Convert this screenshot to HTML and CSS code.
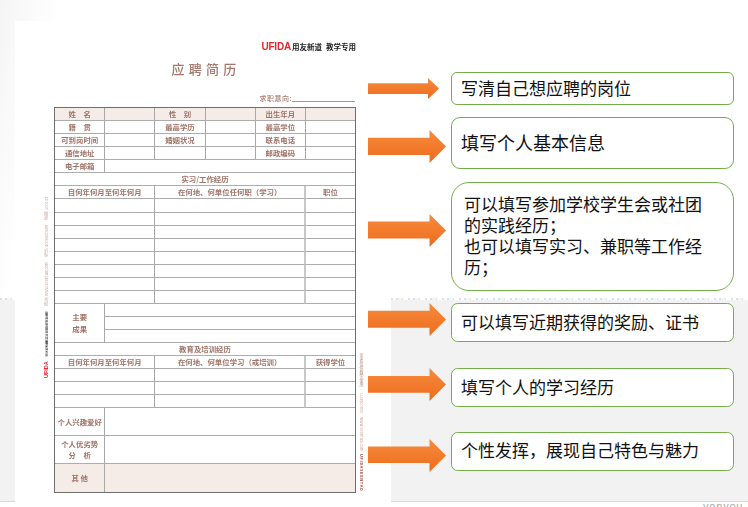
FILE: index.html
```html
<!DOCTYPE html>
<html lang="zh-CN">
<head>
<meta charset="utf-8">
<title>应聘简历</title>
<link rel="stylesheet" href="styles.css">
</head>
<body>
<main class="page">
  <section class="paper">
    <div class="logo"><b>UFIDA</b><span>用友新道</span><span class="logo-sub">教学专用</span></div>
    <h1 class="title">应聘简历</h1>
    <div class="intent"><span>求职意向:</span><i></i></div>
    <div class="sheet-row">
      <div class="strip strip-left"><b>UFIDA</b><strong>用友新道教育科技有限公司授权使用</strong><span>网址: www.seentao.com</span><span>电话: 4006600588</span><span>邮编: 100193</span></div>
      <div class="sheet">
        <div class="c tint">姓　名</div><div class="c tint"></div><div class="c tint">性　别</div><div class="c tint"></div><div class="c tint">出生年月</div><div class="c tint soft"></div>
        <div class="c">籍　贯</div><div class="c"></div><div class="c">最高学历</div><div class="c"></div><div class="c">最高学位</div><div class="c soft"></div>
        <div class="c">可到岗时间</div><div class="c"></div><div class="c">婚姻状况</div><div class="c"></div><div class="c">联系电话</div><div class="c soft"></div>
        <div class="c">通信地址</div><div class="c"></div><div class="c"></div><div class="c"></div><div class="c">邮政编码</div><div class="c soft"></div>
        <div class="c">电子邮箱</div><div class="c s5"></div>
        <div class="c s6">实习/工作经历</div>
        <div class="c s2">自何年何月至何年何月</div><div class="c s3">在何地、何单位任何职（学习）</div><div class="c soft">职位</div>
        <div class="c s2"></div><div class="c s3"></div><div class="c soft"></div>
        <div class="c s2"></div><div class="c s3"></div><div class="c soft"></div>
        <div class="c s2"></div><div class="c s3"></div><div class="c soft"></div>
        <div class="c s2"></div><div class="c s3"></div><div class="c soft"></div>
        <div class="c s2"></div><div class="c s3"></div><div class="c soft"></div>
        <div class="c s2"></div><div class="c s3"></div><div class="c soft"></div>
        <div class="c s2"></div><div class="c s3"></div><div class="c soft"></div>
        <div class="c s2"></div><div class="c s3"></div><div class="c soft"></div>
        <div class="c r3">主要<br>成果</div><div class="c s5"></div>
        <div class="c s5"></div>
        <div class="c s5"></div>
        <div class="c s6">教育及培训经历</div>
        <div class="c s2">自何年何月至何年何月</div><div class="c s3">在何地、何单位学习（或培训）</div><div class="c soft">获得学位</div>
        <div class="c s2"></div><div class="c s3"></div><div class="c soft"></div>
        <div class="c s2"></div><div class="c s3"></div><div class="c soft"></div>
        <div class="c s2"></div><div class="c s3"></div><div class="c soft"></div>
        <div class="c">个人兴趣爱好</div><div class="c s5"></div>
        <div class="c">个人优劣势<br>分　析</div><div class="c s5"></div>
        <div class="c tint end">其 他</div><div class="c s5 tint end"></div>
      </div>
      <div class="strip strip-right"><span>（本表仅供教学使用）</span><span>LU3800850</span><span>www.seentao.com</span><b>UFIDASEENTAO</b></div>
    </div>
  </section>

  <section class="notes">
    <svg width="0" height="0" class="defs" aria-hidden="true"><defs><linearGradient id="arrow-fill" x1="0" y1="0" x2="0" y2="1"><stop offset="0" stop-color="#f68c3e"/><stop offset="1" stop-color="#ee6b1c"/></linearGradient></defs></svg>
    <div class="note note-1">
      <svg class="arrow" width="71" height="21" viewBox="0 0 71 21"><path fill="url(#arrow-fill)" d="M0 5.3H60V0L71 10.5 60 21V16H0Z"/></svg>
      <p class="box h1">写清自己想应聘的岗位</p>
    </div>
    <div class="note note-2">
      <svg class="arrow" width="78" height="33" viewBox="0 0 78 33"><path fill="url(#arrow-fill)" d="M0 7.7H61.5V0L78 16.5 61.5 33V25H0Z"/></svg>
      <p class="box h2">填写个人基本信息</p>
    </div>
    <div class="note note-3">
      <svg class="arrow" width="78" height="33" viewBox="0 0 78 33"><path fill="url(#arrow-fill)" d="M0 7.5H61.5V0L78 16.5 61.5 33V24.5H0Z"/></svg>
      <p class="box h3">可以填写参加学校学生会或社团的实践经历；<br>也可以填写实习、兼职等工作经历；</p>
    </div>
    <div class="note note-4">
      <svg class="arrow" width="78" height="33" viewBox="0 0 78 33"><path fill="url(#arrow-fill)" d="M0 7.7H61.5V0L78 16.5 61.5 33V24.7H0Z"/></svg>
      <p class="box h4">可以填写近期获得的奖励、证书</p>
    </div>
    <div class="note note-5">
      <svg class="arrow" width="78" height="33" viewBox="0 0 78 33"><path fill="url(#arrow-fill)" d="M0 8H61.5V0L78 16.5 61.5 33V24.7H0Z"/></svg>
      <p class="box h5">填写个人的学习经历</p>
    </div>
    <div class="note note-6">
      <svg class="arrow" width="78" height="33" viewBox="0 0 78 33"><path fill="url(#arrow-fill)" d="M0 7.5H61.5V0L78 16.5 61.5 33V24H0Z"/></svg>
      <p class="box h6">个性发挥，展现自己特色与魅力</p>
    </div>
    <div class="brand">yonyou_5</div>
  </section>
</main>
</body>
</html>
```
FILE: styles.css
```css
* { box-sizing: border-box; }
html, body { margin: 0; padding: 0; }
body { font-family: "Noto Sans CJK SC", "Noto Sans", sans-serif; background: #fff; }

.page {
  width: 748px;
  height: 507px;
  overflow: hidden;
  display: grid;
  grid-template-columns: 15px 353px 23px 357px;
  grid-template-rows: 507px;
  background:
    repeating-linear-gradient(90deg, #e9d8f5 0 2px, #fff 2px 5px, #cfe6ea 5px 7px, #f5f5f5 7px 11px, #e8e0c8 11px 12px, #fff 12px 17px) 0 298px / 100% 2px no-repeat,
    linear-gradient(#d9d9d9, #d9d9d9) 0 501px / 100% 1px no-repeat,
    linear-gradient(#f2f2f2, #f2f2f2) 0 298px / 100% 204px no-repeat,
    linear-gradient(100deg, #f5f5f5 0, #fff 60px) 0 0 / 100% 298px no-repeat;
}

/* paper */
.paper {
  grid-column: 2 / 4;
  grid-row: 1;
  margin-top: 21px;
  height: 482px;
  background: #fff;
  padding: 21px 0 0 27px;
  color: #a07468;
}
.logo {
  width: 314px;
  display: flex;
  justify-content: flex-end;
  align-items: center;
  gap: 1px;
  height: 9px;
  color: #222;
  font-size: 8px;
  font-weight: 700;
  line-height: 9px;
  filter: blur(0.4px);
}
.logo b { color: #e8262a; font-family: "Liberation Sans", sans-serif; font-size: 10px; font-weight: 700; letter-spacing: -.2px; }
.logo span { font-size: 7.5px; }
.logo-sub { margin-left: 3px; }
.title {
  width: 301px;
  margin: 9px 0 0 13.5px;
  text-align: center;
  font-size: 13px;
  line-height: 17px;
  font-weight: 500;
  letter-spacing: 4.3px;
  color: #a5786b;
  filter: blur(0.45px);
}
.intent {
  width: 301px;
  margin: 15px 0 0 12px;
  display: flex;
  justify-content: flex-end;
  align-items: flex-end;
  height: 11px;
  font-size: 7px;
  letter-spacing: .5px;
  line-height: 10px;
  font-weight: 500;
  color: #a67d72;
  filter: blur(0.4px);
}
.intent i { display: block; width: 63px; height: 1px; background: #9c9c9c; margin-bottom: 1px; }
.sheet-row { display: flex; margin-top: 4px; }

/* table */
.sheet {
  width: 302px;
  display: grid;
  grid-template-columns: 50.4px 50px 50.2px 50.3px 50px 49.1px;
  grid-template-rows: repeat(23, 13.07px) repeat(3, 28px);
  border: 1px solid #6f6f6f;
  font-size: 7.4px;
  font-weight: 700;
  line-height: 10.5px;
  text-align: center;
  filter: blur(0.45px);
}
.c {
  display: flex;
  align-items: center;
  justify-content: center;
  border-right: 1px solid #a8a8a8;
  border-bottom: 1px solid #adadad;
  white-space: nowrap;
}
.s2 { grid-column: span 2; }
.s3 { grid-column: span 3; border-right: 2px solid #c8c8c8; }
.s5 { grid-column: span 5; border-right: 0; }
.s6 { grid-column: span 6; border-right: 0; }
.soft { border-right: 0; }
.r3 { grid-row: span 3; line-height: 12.5px; }
.tint { background: #f5ece8; }
.end { border-bottom: 0; }

/* side strips */
.strip {
  width: 12px;
  height: 385px;
  writing-mode: vertical-rl;
  display: flex;
  align-items: center;
  font-size: 4px;
  line-height: 5px;
  color: #c9a79c;
  white-space: nowrap;
  filter: blur(0.35px);
}
.strip-left { transform: rotate(180deg); padding: 114px 0 0 3px; gap: 5px; }
.strip-left b { color: #e8262a; font-family: "Liberation Sans", sans-serif; font-size: 5.5px; }
.strip-left strong { color: #333; font-size: 2.8px; width: 4px; font-weight: 700; }
.strip-right { justify-content: flex-end; gap: 3px; padding-right: 2px; }
.strip-right b { color: #a5574c; font-size: 4px; letter-spacing: .6px; }
.strip-right span:first-child { color: #b58e84; }

/* notes */
.notes { grid-column: 3 / 5; grid-row: 1; position: relative; z-index: 1; display: flex; flex-direction: column; padding-top: 72px; }
.defs { position: absolute; }
.note { display: flex; align-items: flex-start; }
.note-2 { margin-top: 12.8px; }
.note-3 { margin-top: 12.8px; }
.note-4 { margin-top: 12.5px; }
.note-5 { margin-top: 25.5px; }
.note-6 { margin-top: 25px; }
.arrow { flex: none; display: block; margin-right: 5px; }
.note-1 .arrow { margin-top: 6px; margin-right: 12px; }
.note-2 .arrow { margin-top: 13px; }
.note-3 .arrow { margin-top: 32px; }
.note-6 .arrow { margin-top: 7px; }
.box {
  margin: 0;
  width: 283px;
  display: flex;
  align-items: center;
  padding-left: 9px;
  border: 1.2px solid #74ae4b;
  background: #fff;
  font-size: 17px;
  line-height: 20.8px;
  color: #111;
  white-space: nowrap;
}
.h1 { height: 32.6px; border-radius: 6px; }
.h2 { height: 51.6px; border-radius: 9px; font-size: 18px; padding-bottom: 1px; }
.h3 { height: 109px; border-radius: 18px; padding: 11.5px 28px 0 12px; white-space: normal; display: block; }
.h4 { height: 38.8px; border-radius: 6.5px; padding-bottom: 1px; }
.h5 { height: 39.4px; border-radius: 6.5px; }
.h6 { height: 39.4px; border-radius: 6.5px; padding-bottom: 2px; }
.brand {
  margin: auto 0 -4px 335px;
  height: 10px;
  font-family: "Liberation Sans", sans-serif;
  font-size: 11px;
  line-height: 10px;
  letter-spacing: .8px;
  color: #a8a8a8;
  white-space: nowrap;
}
```
